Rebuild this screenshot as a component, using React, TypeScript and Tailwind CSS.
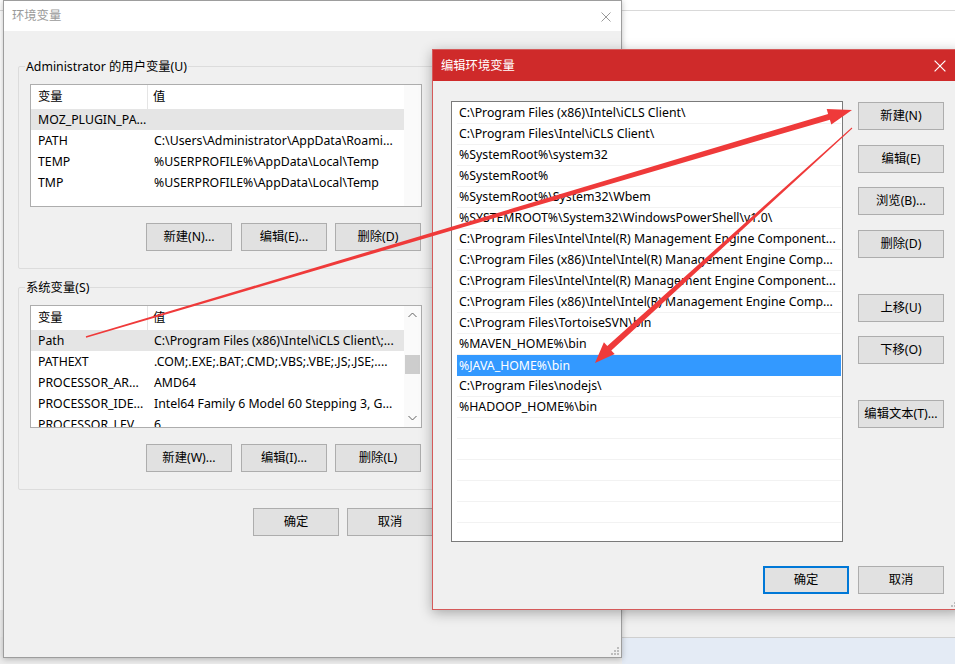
import React from 'react'

const USER_VARS: [string, string][] = [
  ['MOZ_PLUGIN_PA...', ''],
  ['PATH', 'C:\\Users\\Administrator\\AppData\\Roami...'],
  ['TEMP', '%USERPROFILE%\\AppData\\Local\\Temp'],
  ['TMP', '%USERPROFILE%\\AppData\\Local\\Temp'],
]

const SYSTEM_VARS: [string, string][] = [
  ['Path', 'C:\\Program Files (x86)\\Intel\\iCLS Client\\;...'],
  ['PATHEXT', '.COM;.EXE;.BAT;.CMD;.VBS;.VBE;.JS;.JSE;....'],
  ['PROCESSOR_AR...', 'AMD64'],
  ['PROCESSOR_IDE...', 'Intel64 Family 6 Model 60 Stepping 3, G...'],
  ['PROCESSOR_LEV...', '6'],
]

const PATH_ITEMS = [
  'C:\\Program Files (x86)\\Intel\\iCLS Client\\',
  'C:\\Program Files\\Intel\\iCLS Client\\',
  '%SystemRoot%\\system32',
  '%SystemRoot%',
  '%SystemRoot%\\System32\\Wbem',
  '%SYSTEMROOT%\\System32\\WindowsPowerShell\\v1.0\\',
  'C:\\Program Files\\Intel\\Intel(R) Management Engine Component...',
  'C:\\Program Files (x86)\\Intel\\Intel(R) Management Engine Comp...',
  'C:\\Program Files\\Intel\\Intel(R) Management Engine Component...',
  'C:\\Program Files (x86)\\Intel\\Intel(R) Management Engine Comp...',
  'C:\\Program Files\\TortoiseSVN\\bin',
  '%MAVEN_HOME%\\bin',
  '%JAVA_HOME%\\bin',
  'C:\\Program Files\\nodejs\\',
  '%HADOOP_HOME%\\bin',
]

function Btn({ label, className = '', focused = false }: { label: string; className?: string; focused?: boolean }) {
  return (
    <div
      className={`w-[86px] h-[28px] shrink-0 flex items-center justify-center pt-[1px] bg-[#e1e1e1] text-[12.3px] text-black ${
        focused ? 'border-2 border-[#0078d7]' : 'border border-[#adadad]'
      } ${className}`}
    >
      {label}
    </div>
  )
}

function CloseX({ color, size = 10 }: { color: string; size?: number }) {
  return (
    <svg width={size} height={size} viewBox="0 0 10 10">
      <path d="M0.5 0.5 L9.5 9.5 M9.5 0.5 L0.5 9.5" stroke={color} strokeWidth="1" fill="none" />
    </svg>
  )
}

function Grip() {
  return (
    <svg width="8" height="8" viewBox="0 0 8 8" className="absolute right-[2px] bottom-[2px]">
      {[
        [6, 0],
        [6, 3],
        [3, 3],
        [6, 6],
        [3, 6],
        [0, 6],
      ].map(([x, y]) => (
        <rect key={`${x}-${y}`} x={x} y={y} width="2" height="2" fill="#bdbdbd" />
      ))}
    </svg>
  )
}

function VarList({ rows, scroll }: { rows: [string, string][]; scroll?: boolean }) {
  return (
    <div className="w-[392px] h-[123px] border border-[#adadad] bg-white flex overflow-hidden">
      <div className="flex-1 flex flex-col">
        <div className="h-[24px] shrink-0 flex items-center">
          <div className="w-[117px] h-full pl-[7px] pt-[1px] flex items-center border-r border-[#e5e5e5]">变量</div>
          <div className="flex-1 pl-[5px] pt-[1px]">值</div>
        </div>
        {rows.map(([k, v], i) => (
          <div key={k} className={`h-[21px] shrink-0 flex items-center pt-[1px] ${i === 0 ? 'bg-[#e5e5e5]' : ''}`}>
            <div className="w-[117px] pl-[7px] whitespace-nowrap overflow-hidden">{k}</div>
            <div className="flex-1 pl-[6px] whitespace-nowrap overflow-hidden">{v}</div>
          </div>
        ))}
      </div>
      <div className="w-[17px] shrink-0 flex flex-col items-center bg-[#fafafa]">
        {scroll && (
          <>
            <svg width="9" height="6" viewBox="0 0 9 6" className="mt-[6px]">
              <path d="M0.5 5 L4.5 1 L8.5 5" stroke="#606060" fill="none" />
            </svg>
            <div className="mt-[37px] w-[15px] h-[19px] bg-[#cdcdcd]" />
            <div className="flex-1" />
            <svg width="9" height="6" viewBox="0 0 9 6" className="mb-[6px]">
              <path d="M0.5 1 L4.5 5 L8.5 1" stroke="#606060" fill="none" />
            </svg>
          </>
        )}
      </div>
    </div>
  )
}

function GroupBox({ title, children, className = '' }: { title: string; children: React.ReactNode; className?: string }) {
  return (
    <div className={`relative w-[590px] border border-[#dcdcdc] rounded-[2px] pl-[11px] pt-[17px] pb-[17px] ${className}`}>
      <div className="absolute left-[6px] -top-[9px] px-[1px] leading-[17px] bg-[#f0f0f0] text-black">{title}</div>
      {children}
    </div>
  )
}

function Arrows() {
  return (
    <svg className="absolute inset-0 pointer-events-none" width="955" height="664" viewBox="0 0 955 664">
      <polygon
        points="86.2,337.7 829.9,119.7 831.3,124.5 852,110 826.7,109.1 828.1,113.9 85.8,336.3"
        fill="#ef3a3a"
      />
      <polygon
        points="852.3,128.4 611.3,350.4 614.7,354.1 595,363 603.9,342.3 607.3,346.0 851.7,127.6"
        fill="#ef3a3a"
      />
    </svg>
  )
}

export default function App() {
  return (
    <div className="relative w-[955px] h-[664px] overflow-hidden bg-white text-[12.3px] text-black font-['Noto_Sans','Noto_Sans_CJK_SC',sans-serif]">
      {/* desktop behind */}
      <div className="absolute left-0 top-[10px] w-full h-px bg-[#d9d9d9]" />
      <div className="absolute left-0 top-[610px] w-full h-[27px] bg-[#f0f0f0]" />
      <div className="absolute left-0 top-[637px] w-full h-[27px] border-t border-[#cfcfcf] bg-[#e4ebf5]" />
      <div className="absolute left-0 top-[637px] w-[622px] h-[27px] bg-[#ececec]" />

      {/* 环境变量 */}
      <div className="absolute left-[3px] top-0 w-[619px] h-[658px] border border-[#9d9d9d] bg-[#f0f0f0] shadow-[0_1px_6px_rgba(0,0,0,0.25)]">
        <div className="h-[30px] bg-white flex items-center justify-between pl-[8px] pr-[10px] pt-[1px]">
          <span className="text-[#9a9a9a]">环境变量</span>
          <CloseX color="#9a9a9a" />
        </div>
        <div className="pl-[14px] pt-[35px]">
          <GroupBox title="Administrator 的用户变量(U)">
            <VarList rows={USER_VARS} />
            <div className="flex mt-[16px] pl-[116px]">
              <Btn label="新建(N)..." />
              <Btn label="编辑(E)..." className="ml-[9px]" />
              <Btn label="删除(D)" className="ml-[8px]" />
            </div>
          </GroupBox>
          <GroupBox title="系统变量(S)" className="mt-[18px]">
            <VarList rows={SYSTEM_VARS} scroll />
            <div className="flex mt-[16px] pl-[116px]">
              <Btn label="新建(W)..." />
              <Btn label="编辑(I)..." className="ml-[9px]" />
              <Btn label="删除(L)" className="ml-[8px]" />
            </div>
          </GroupBox>
          <div className="flex mt-[18px] pl-[235px]">
            <Btn label="确定" />
            <Btn label="取消" className="ml-[8px]" />
          </div>
        </div>
        <Grip />
      </div>

      {/* 编辑环境变量 */}
      <div className="absolute left-[432px] top-[49px] w-[530px] h-[561px] border border-[#d55a5a] bg-[#f0f0f0] shadow-[0_3px_12px_rgba(0,0,0,0.3)]">
        <div className="h-[31px] bg-[#cf2a2a] flex items-center justify-between pl-[8px] pr-[15px] pt-[1px]">
          <span className="text-white">编辑环境变量</span>
          <CloseX color="#ffffff" size={12} />
        </div>
        <div className="pl-[18px] pt-[20px]">
          <div className="flex">
            <div className="w-[392px] h-[441px] border border-[#7a7a7a] bg-white pl-[5px] pr-[1px] pt-[1px] overflow-hidden">
              {PATH_ITEMS.map((p, i) => (
                <div
                  key={i}
                  className={`h-[21px] pl-[2px] pt-[1px] flex items-center whitespace-nowrap overflow-hidden ${
                    i === 12 ? 'bg-[#3399ff] text-white' : 'border-b border-[#f2f2f2]'
                  }`}
                >
                  {p}
                </div>
              ))}
              {Array.from({ length: 6 }).map((_, i) => (
                <div key={`e${i}`} className="h-[21px] border-b border-[#f2f2f2]" />
              ))}
            </div>
            <div className="ml-[15px] flex flex-col">
              <Btn label="新建(N)" className="mt-[1px]" />
              <Btn label="编辑(E)" className="mt-[15px]" />
              <Btn label="浏览(B)..." className="mt-[14px]" />
              <Btn label="删除(D)" className="mt-[15px]" />
              <Btn label="上移(U)" className="mt-[36px]" />
              <Btn label="下移(O)" className="mt-[14px]" />
              <Btn label="编辑文本(T)..." className="mt-[36px]" />
            </div>
          </div>
          <div className="flex mt-[24px] pl-[312px]">
            <Btn label="确定" focused />
            <Btn label="取消" className="ml-[9px]" />
          </div>
        </div>
        <Grip />
      </div>

      <Arrows />
    </div>
  )
}
